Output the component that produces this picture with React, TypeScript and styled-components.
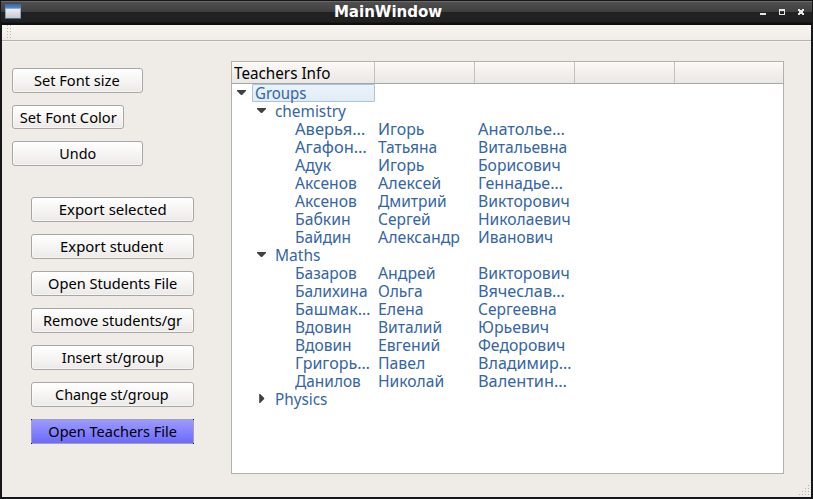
import React, { useLayoutEffect, useRef, useState } from 'react';
import styled, { createGlobalStyle, css } from 'styled-components';

const GlobalStyle = createGlobalStyle`
  * { box-sizing: border-box; }
  body { margin: 0; overflow: hidden; font-family: "Noto Sans", "Open Sans", sans-serif; }
`;

const Window = styled.div`
  width: 813px;
  height: 499px;
  display: flex;
  flex-direction: column;
  background: #efebe6;
  border: solid #17171a;
  border-width: 0 2px 2px;
`;

const TitleBar = styled.header`
  flex: none;
  height: 25px;
  margin: 0 -1px;
  padding: 0 6px 0 4px;
  display: grid;
  grid-template-columns: 16px 1fr 50px;
  background: linear-gradient(#17151a 0 1px, #6a6a6a 1px 2px, #505050 2px, #3e3e3e 12px, #212121 12px 22px, #120f10 23px);
`;

const WindowIcon = styled.svg`
  display: block;
  width: 16px;
  height: 15px;
  margin-top: 4px;
`;

const Title = styled.h1`
  margin: 0;
  display: flex;
  justify-content: center;
  color: #fff;
  font: bold 15px/24px "DejaVu Sans", sans-serif;
`;

const WindowControls = styled.svg`
  display: block;
  justify-self: end;
  width: 50px;
  height: 25px;
`;

const ToolBar = styled.div`
  flex: none;
  height: 17px;
  padding-left: 5px;
  background: linear-gradient(#f9f5f0, #efebe6 15px, #b5b1ad 15px 16px, #f7f4f0 16px);
`;

const Handle = styled.svg`
  display: block;
  width: 5px;
  height: 15px;
`;

const Content = styled.main`
  flex: 1;
  min-height: 0;
  display: flex;
  padding: 19px 27px 0 10px;
  gap: 37px;
`;

const Controls = styled.nav`
  width: 182px;
  padding-top: 7px;
`;

const FontControls = styled.div`
  display: grid;
  justify-items: start;
  grid-template-rows: 25px 24px 25px;
  gap: 12px;
`;

const FileControls = styled.div`
  display: grid;
  grid-auto-rows: 25px;
  gap: 12px;
  padding: 31px 0 0 19px;
`;

const Button = styled.button<{ $width?: number; $active?: boolean }>`
  width: ${p => p.$width ?? 163}px;
  height: 100%;
  padding: 0 0.5px 0 0;
  display: flex;
  align-items: center;
  justify-content: center;
  border: 1px solid #aaa6a3;
  border-radius: 3px;
  background: linear-gradient(#fff, #f6f5f4 50%, #ebeae9);
  box-shadow: inset 0 0 0 1px #ffffff80;
  color: #000;
  font: 14.6px/21px "Noto Sans", sans-serif;
  ${p => p.$active && css`
    border-radius: 0;
    border: 0;
    background:
      linear-gradient(#0d0790, #0d0790) 0 0 / 1px 1px no-repeat,
      linear-gradient(#0d0790, #0d0790) 100% 0 / 1px 1px no-repeat,
      linear-gradient(#0d0790, #0d0790) 0 100% / 1px 1px no-repeat,
      linear-gradient(#0d0790, #0d0790) 100% 100% / 1px 1px no-repeat,
      linear-gradient(#9c9bff, #6c6afa) 1px 1px / 161px 23px no-repeat,
      #a09fb8;
    box-shadow: none;
  `}
`;

const Tree = styled.section`
  width: 553px;
  height: 413px;
  border: 1px solid #b4b0ac;
  background: #fff;
  color: #3465a4;
  font-size: 15.6px;
  line-height: 18px;
`;

const TreeHeader = styled.div`
  height: 22px;
  display: grid;
  grid-template-columns: 143px 100px 100px 100px 1fr;
  border-bottom: 1px solid #aaa6a3;
  background: linear-gradient(#fdf9f6, #f3f0ec 50%, #eae8e5);
  color: #000;
`;

const HeaderCell = styled.div`
  padding: 2px 0 0 2px;
  border-right: 1px solid #c5c1bd;
  &:last-child { border-right: 0; }
`;

const Branch = styled.div<{ $level: number }>`
  height: 18px;
  display: flex;
  padding-left: ${p => p.$level * 20}px;
`;

const Arrow = styled.svg`
  flex: none;
  width: 20px;
  height: 18px;
`;

const BranchLabel = styled.div<{ $selected?: boolean }>`
  width: 123px;
  height: 18px;
  padding-left: 3px;
  ${p => p.$selected && css`
    border: 1px solid #a9c3d8;
    border-radius: 1px;
    padding-left: 2px;
    line-height: 16px;
    background: linear-gradient(#e9f3fb, #e2ecf5);
  `}
`;

const PersonRow = styled.div`
  height: 18px;
  display: grid;
  grid-template-columns: 83px 100px 1fr;
  padding-left: 63px;
`;

const FittedText = styled.span<{ $center?: boolean }>`
  display: block;
  width: max-content;
  white-space: nowrap;
  transform-origin: ${p => (p.$center ? '50%' : '0')} 50%;
`;

// Condenses a label horizontally to its intended drawn width.
function Label({ children, width, center }: { children: string; width: number; center?: boolean }) {
  const ref = useRef<HTMLSpanElement>(null);
  const [scale, setScale] = useState(1);
  useLayoutEffect(() => {
    const ctx = document.createElement('canvas').getContext('2d');
    if (!ref.current || !ctx) return;
    const style = getComputedStyle(ref.current);
    ctx.font = `${style.fontWeight} ${style.fontSize} ${style.fontFamily}`;
    const m = ctx.measureText(children);
    setScale(width / (m.actualBoundingBoxRight + m.actualBoundingBoxLeft));
  }, [children, width]);
  return <FittedText ref={ref} $center={center} style={{ transform: `scaleX(${scale})` }}>{children}</FittedText>;
}

type Cell = [string, number];

const fileActions: Cell[] = [
  ['Export selected', 106], ['Export student', 102], ['Open Students File', 129],
  ['Remove students/gr', 138], ['Insert st/group', 102], ['Change st/group', 113.5],
  ['Open Teachers File', 128.5],
];

const chemistry: Cell[][] = [
  [['Аверья…', 70], ['Игорь', 45], ['Анатолье…', 86.5]],
  [['Агафон…', 71.5], ['Татьяна', 58.5], ['Витальевна', 87.5]],
  [['Адук', 37], ['Игорь', 45], ['Борисович', 80.5]],
  [['Аксенов', 62], ['Алексей', 62.5], ['Геннадье…', 83.5]],
  [['Аксенов', 62], ['Дмитрий', 68], ['Викторович', 89.5]],
  [['Бабкин', 54], ['Сергей', 52], ['Николаевич', 90.5]],
  [['Байдин', 54.5], ['Александр', 81.5], ['Иванович', 73]],
];

const maths: Cell[][] = [
  [['Базаров', 61], ['Андрей', 57], ['Викторович', 89.5]],
  [['Балихина', 71], ['Ольга', 44], ['Вячеслав…', 85.5]],
  [['Башмак…', 74], ['Елена', 44], ['Сергеевна', 78]],
  [['Вдовин', 55], ['Виталий', 62.5], ['Юрьевич', 69]],
  [['Вдовин', 55], ['Евгений', 60.5], ['Федорович', 86]],
  [['Григорь…', 73.5], ['Павел', 45], ['Владимир…', 92]],
  [['Данилов', 66], ['Николай', 64.5], ['Валентин…', 87.5]],
];

function People({ rows }: { rows: Cell[][] }) {
  return <>{rows.map((row, i) => (
    <PersonRow key={i}>
      {row.map(([text, width], j) => <div key={j}><Label width={width}>{text}</Label></div>)}
    </PersonRow>
  ))}</>;
}

function BranchRow({ text, width, level = 1, open = true, selected = false }:
  { text: string; width: number; level?: number; open?: boolean; selected?: boolean }) {
  return (
    <Branch $level={level}>
      <Arrow viewBox="0 0 20 18">
        <path d={open ? 'M5 6h9v1l-4 4h-1l-4-4z' : 'M7.2 4h1l4 4v1l-4 4h-1z'} fill="#404040" />
      </Arrow>
      <BranchLabel $selected={selected}><Label width={width}>{text}</Label></BranchLabel>
    </Branch>
  );
}

const GripSvg = styled.svg`
  flex: none;
  align-self: flex-end;
  width: 14px;
  height: 14px;
`;

function Grip() {
  const dots = [[11, 2], [8, 5], [11, 5], [5, 8], [8, 8], [11, 8], [2, 11], [5, 11], [8, 11], [11, 11]];
  return (
    <GripSvg viewBox="0 0 14 14" shapeRendering="crispEdges">
      {dots.map(([x, y]) => <path key={`${x}-${y}`} d={`M${x} ${y}h1v1h-1z`} fill="#b5b1ac" />)}
    </GripSvg>
  );
}

export default function App() {
  return (
    <>
      <GlobalStyle />
      <Window>
        <TitleBar>
          <WindowIcon viewBox="0 0 16 15">
            <defs>
              <linearGradient id="sheet" x2="0" y2="1"><stop stopColor="#ededed" /><stop offset="1" stopColor="#c8c8c8" /></linearGradient>
              <linearGradient id="caption" x2="0" y2="1"><stop stopColor="#3465a4" /><stop offset="1" stopColor="#5688c6" /></linearGradient>
            </defs>
            <path d="M0 0h16v15H0z" fill="#3d6da9" />
            <path d="M0 0h16v4H0z" fill="url(#caption)" />
            <path d="M0 4h16v1H0z" fill="#85acd9" />
            <path d="M.5 5h15v9H.5z" fill="url(#sheet)" />
          </WindowIcon>
          <Title><Label width={107.5} center>MainWindow</Label></Title>
          <WindowControls viewBox="756 0 50 25" shapeRendering="crispEdges">
            <path d="M760 13h6v2h-6z" fill="#e5e5e5" />
            <path fillRule="evenodd" d="M779 9h6v6h-6zM780 11v3h4v-3z" fill="#e5e5e5" />
            <path d="M798 9h2v1h2V9h2v2h-1v2h1v2h-2v-1h-2v1h-2v-2h1v-2h-1z" fill="#e5e5e5" />
          </WindowControls>
        </TitleBar>
        <ToolBar>
          <Handle viewBox="0 0 5 15" shapeRendering="crispEdges">
            {[0, 3, 6, 9, 12].map(y => <path key={y} d={`M0 ${y}h1v1H0zM3 ${y}h1v1H3z`} fill="#b9b5b1" />)}
          </Handle>
        </ToolBar>
        <Content>
          <Controls>
            <FontControls>
              <Button $width={131}><Label width={85.5} center>Set Font size</Label></Button>
              <Button $width={112}><Label width={97} center>Set Font Color</Label></Button>
              <Button $width={131}><Label width={36} center>Undo</Label></Button>
            </FontControls>
            <FileControls>
              {fileActions.map(([text, width]) => (
                <Button key={text} $active={text === 'Open Teachers File'}><Label width={width} center>{text}</Label></Button>
              ))}
            </FileControls>
          </Controls>
          <Tree>
            <TreeHeader>
              <HeaderCell><Label width={96}>Teachers Info</Label></HeaderCell>
              <HeaderCell /><HeaderCell /><HeaderCell /><HeaderCell />
            </TreeHeader>
            <BranchRow text="Groups" width={51} level={0} selected />
            <BranchRow text="chemistry" width={71} />
            <People rows={chemistry} />
            <BranchRow text="Maths" width={44} />
            <People rows={maths} />
            <BranchRow text="Physics" width={51} open={false} />
          </Tree>
        </Content>
        <Grip />
      </Window>
    </>
  );
}
